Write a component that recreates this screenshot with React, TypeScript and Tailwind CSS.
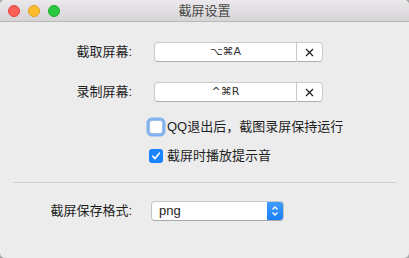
const cjk = { fontFamily: '"Helvetica Neue", "Liberation Sans", "Noto Sans CJK SC", sans-serif' };
const sym = { fontFamily: '"DejaVu Sans", "Liberation Sans", sans-serif' };

function ShortcutRow({ label, keys }: { label: string; keys: string }) {
  return (
    <div className="flex items-center h-5">
      <div className="w-[133px] text-right text-[13px] text-[#1e1e1e] pr-px">{label}</div>
      <div className="ml-[21px] flex h-5">
        <div
          className="w-[143px] h-5 bg-white border border-[#c9c9c9] border-b-[#aeaeae] rounded-l-[4px] flex items-center justify-center text-[11px] text-[#333]"
          style={sym}
        >
          {keys}
        </div>
        <div className="w-[26px] h-5 bg-white border border-l-0 border-[#c9c9c9] border-b-[#aeaeae] rounded-r-[4px] flex items-center justify-center">
          <svg width="9" height="9" viewBox="0 0 9 9">
            <path d="M1 1 L8 8 M8 1 L1 8" stroke="#222" strokeWidth="1.3" />
          </svg>
        </div>
      </div>
    </div>
  );
}

export default function App() {
  return (
    <div className="w-[409px] h-[258px] bg-[#a8a8a8]" style={cjk}>
      <div className="w-full h-full bg-[#ececec] rounded-[5px] overflow-hidden flex flex-col">
        {/* title bar */}
        <div className="h-[22px] flex-shrink-0 bg-gradient-to-b from-[#ebe9eb] to-[#d5d3d5] border-b border-[#b9b9b9] flex items-center relative">
          <div className="flex items-center gap-2 pl-2">
            <span className="w-3 h-3 rounded-full bg-[#fc5f57] border border-[#e0443e]" />
            <span className="w-3 h-3 rounded-full bg-[#fdbc2e] border border-[#dea123]" />
            <span className="w-3 h-3 rounded-full bg-[#28c840] border border-[#1aab29]" />
          </div>
          <div className="absolute inset-0 flex items-center justify-center text-[13px] text-[#4a4a4a]">
            截屏设置
          </div>
        </div>

        <div className="flex flex-col">
          <div className="mt-5">
            <ShortcutRow label="截取屏幕:" keys="⌥⌘A" />
          </div>
          <div className="mt-5">
            <ShortcutRow label="录制屏幕:" keys="^⌘R" />
          </div>

          {/* checkboxes */}
          <div className="mt-[17px] h-4 flex items-center pl-[149px]">
            <span className="w-[14px] h-[14px] rounded-[3px] bg-white border border-[#9fbfe8] shadow-[0_0_0_2.5px_#7fb2ee]" />
            <span className="ml-[4px] text-[13px] text-[#1e1e1e]">QQ退出后，截图录屏保持运行</span>
          </div>
          <div className="mt-[13px] h-4 flex items-center pl-[149px]">
            <span className="w-[14px] h-[14px] rounded-[3px] bg-[#1a82fb] flex items-center justify-center">
              <svg width="10" height="10" viewBox="0 0 10 10">
                <path d="M1.8 5.2 L4 7.6 L8.4 2.2" stroke="white" strokeWidth="1.6" fill="none" strokeLinecap="round" strokeLinejoin="round" />
              </svg>
            </span>
            <span className="ml-[4px] text-[13px] text-[#1e1e1e]">截屏时播放提示音</span>
          </div>

          {/* separator */}
          <div className="mt-[18px] mx-[13px] h-px bg-[#d0d0d0]" />

          {/* format select */}
          <div className="mt-[18px] flex items-center h-5">
            <div className="w-[133px] text-right text-[13px] text-[#1e1e1e] pr-px">截屏保存格式:</div>
            <div className="ml-[18px] w-[133px] h-5 flex rounded-[4px] border border-[#c4c4c4] border-b-[#a9a9a9] overflow-hidden bg-white">
              <div className="flex-1 pl-[7px] flex items-center text-[13px] text-[#1e1e1e]" style={{ fontFamily: '"Liberation Sans", sans-serif' }}>
                png
              </div>
              <div className="w-4 bg-gradient-to-b from-[#3f9dfd] to-[#1a7ef8] flex items-center justify-center">
                <svg width="8" height="12" viewBox="0 0 8 12">
                  <path d="M1.5 4.5 L4 2 L6.5 4.5 M1.5 7.5 L4 10 L6.5 7.5" stroke="white" strokeWidth="1.3" fill="none" />
                </svg>
              </div>
            </div>
          </div>
        </div>
      </div>
    </div>
  );
}
